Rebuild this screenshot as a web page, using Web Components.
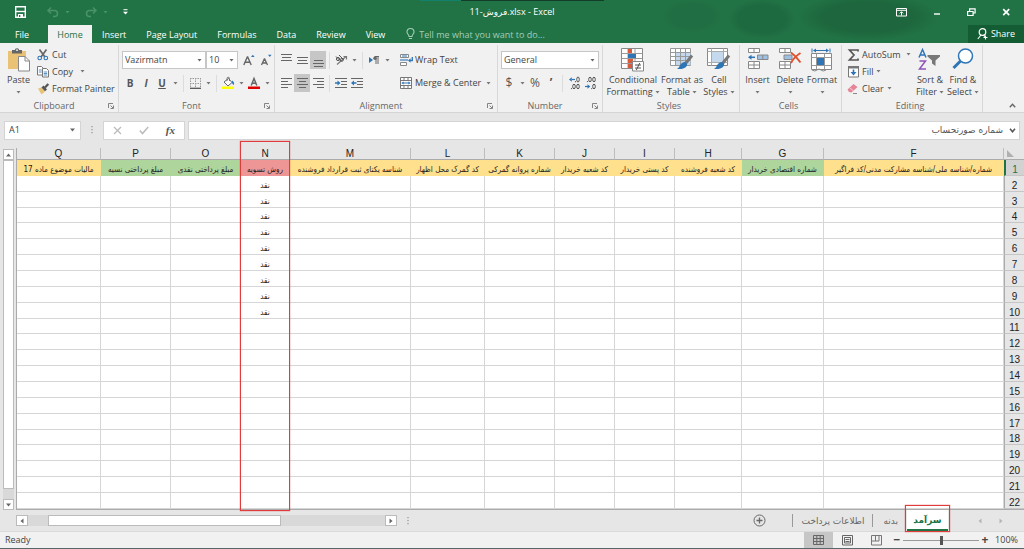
<!DOCTYPE html>
<html lang="en">
<head>
<meta charset="utf-8">
<title>فروش-11.xlsx - Excel</title>
<style>
html,body{margin:0;height:100%}
body{font:9px/12px "Open Sans","DejaVu Sans",sans-serif;color:#444;background:#e6e6e6;overflow:hidden}
</style>
</head>
<body>
<excel-app></excel-app>
<script>
const RESET = `
*{box-sizing:border-box}
button,select,input{font:inherit;color:inherit;border:0;background:none;padding:0;margin:0;border-radius:0;outline:0}
select{appearance:none}
button{display:flex;align-items:center;justify-content:center;white-space:nowrap}
`;
const define = (name, css, html) => customElements.define(name, class extends HTMLElement {
  constructor() {
    super();
    this.attachShadow({ mode: 'open' });
  }
  connectedCallback() {
    if (this.ready) return;
    this.ready = true;
    const t = document.createElement('template');
    t.innerHTML = `<style>${RESET}${css}</style>${typeof html === 'function' ? html(this) : html}`;
    this.shadowRoot.append(t.content.cloneNode(true));
  }
});

/* ---------- icons: [width, height, svg content] ---------- */
const lines = (...ls) => ls.map(([x, y, w]) => `<path d="M${x} ${y}h${w}" stroke="#666"/>`).join('');
const brush = '<path d="M22 7.5l-6.5 8" stroke="#777" stroke-width="3"/><path d="M14.500 14c2 .4 3 1.600 2.500 3.400-1.500 3-5.500 4-10 3.600 3-1.500 2.600-6 7.500-7z" fill="#2e75b6"/>';
const ICONS = {
  save: [11, 12, '<path d="M.7.7h9.600v10.600H.7z" stroke="#fff" stroke-width="1.400"/><path d="M1 5.500h9" stroke="#fff" stroke-width="1.400"/><path d="M3 8h5v3H3z" fill="#fff"/><path d="M4 9h1.300v2H4z" fill="#217346"/>'],
  undo: [12, 10, '<path d="M1 3.500h6.500a3 3 0 0 1 0 6H6M4 .5l-3 3 3 3" stroke="#4a9269" stroke-width="1.500"/>'],
  redo: [12, 10, '<path d="M11 3.500H4.500a3 3 0 0 0 0 6H6M8 .5l3 3-3 3" stroke="#4a9269" stroke-width="1.500"/>'],
  qat: [5, 6, '<path d="M.5.7h4" stroke="#fff"/><path d="M0 2.800h5L2.500 5.500z" fill="#fff"/>'],
  arrow: [5, 3, '<path d="M.5 0h4L2.500 2.600z" fill="currentColor"/>'],
  bulb: [9, 12, '<path d="M3 8.500C3 6.500 1 6 1 4a3.500 3.500 0 0 1 7 0c0 2-2 2.500-2 4.500zM3 10.500h3" stroke="#a5cdb6" stroke-width="1.100"/>'],
  ribbonmode: [11, 9, '<path d="M.5.500h10v7.500H.5zM.5 2.300h10" stroke="#fff"/><path d="M5.500 7.500V4M3.800 5.400l1.700-1.700 1.700 1.700" stroke="#fff"/>'],
  min: [8, 9, '<path d="M1 6h6" stroke="#fff" stroke-width="1.400"/>'],
  restore: [9, 9, '<path d="M.6 3.500h5.500v4H.6zM2.600 3V.8h5.500V5H6.400" stroke="#fff" stroke-width="1.200"/>'],
  close: [9, 9, '<path d="M1.200 1.200l6 6M7.200 1.200l-6 6" stroke="#fff" stroke-width="1.700"/>'],
  person: [11, 12, '<circle cx="5.500" cy="4" r="3.300" stroke="#fff" stroke-width="1.200"/><path d="M4 7L.8 11M6.500 7.300L8 8.500M8.500 7.500v4M6.500 9.500h4" stroke="#fff" stroke-width="1.100"/>'],
  paste: [24, 24, '<path d="M1 3h18v18H1z" fill="#e9c276"/><path d="M5 2h10v3.500H5z" fill="#666"/><circle cx="10" cy="2.500" r="2.200" fill="#666"/><circle cx="10" cy="2.200" r=".9" fill="#f1f1f1"/><path d="M11.500 8.500h6.500l4.500 4.500v10h-11z" fill="#fff" stroke="#888"/><path d="M18 8.500V13h4.500" stroke="#888"/>'],
  cut: [12, 12, '<path d="M2.500.5l5.500 7.500M9.500.5L4 8" stroke="#666" stroke-width="1.700"/><circle cx="2.700" cy="9" r="1.800" stroke="#2e75b6" stroke-width="1.100"/><circle cx="8.800" cy="9" r="1.800" stroke="#2e75b6" stroke-width="1.100"/>'],
  copy: [12, 12, '<path d="M.5.500h4l2 2V9h-6z" fill="#fff" stroke="#777"/><path d="M1.800 4h3M1.800 6h3" stroke="#2e75b6" stroke-width=".8"/><path d="M5.500 2.500h4l2 2v6.500h-6z" fill="#fff" stroke="#777"/><path d="M6.700 6h3.500M6.700 7.500h3.500M6.700 9h3.500" stroke="#2e75b6" stroke-width=".8"/>'],
  painter: [12, 12, '<path d="M1 5.500l3.500-1 3.500 4L4.500 11.500C3 9 2 7 1 5.500z" fill="#e9c276"/><path d="M4.500 4.500l2-2 3.500 4-2 1.800z" fill="#555"/><path d="M8 4.500l3.300-3.500" stroke="#555" stroke-width="2.200"/>'],
  grow: [12, 12, '<path d="M.8 11L4.300 3h.4L8.200 11M2 8.300h5" stroke="#666" stroke-width="1.400"/><path d="M8 3l1.800-2.300L11.600 3z" fill="#2e75b6"/>'],
  shrink: [12, 12, '<path d="M1.500 11L4.300 5h.4L7.500 11M2.500 9h4" stroke="#666" stroke-width="1.300"/><path d="M8 .8h3.600L9.800 3z" fill="#2e75b6"/>'],
  borders: [11, 11, '<path d="M.5 0v10M5.500 0v10M10.500 0v10M0 .5h11M0 5.500h11" stroke="#999" stroke-dasharray="1.500 1"/><path d="M0 10.300h11" stroke="#555" stroke-width="1.300"/>'],
  fill: [13, 12, '<path d="M2 5l4.500-3.500L10 5.500 6 9z" fill="#fff" stroke="#666"/><path d="M5 4V1.500a1.200 1.200 0 0 1 2.500 0V4" stroke="#666" stroke-width=".9"/><path d="M10 3.500q2.500 1 2 4.500-1.500-.5-2-2z" fill="#2e75b6"/><path d="M0 9.500h12V12H0z" fill="#ff0"/>'],
  fontcolor: [12, 12, '<path d="M3.200 8.500L6 1.500l2.800 7M4 6.300h4" stroke="#666" stroke-width="1.500"/><path d="M0 9.500h12V12H0z" fill="#e00000"/>'],
  top: [11, 14, lines([0, 1.500, 11], [1, 4.500, 9], [0, 7.500, 11])],
  middle: [11, 14, lines([0, 4.500, 11], [1, 7.500, 9], [0, 10.500, 11])],
  bottom: [11, 14, lines([1, 7.500, 9], [0, 10.500, 11], [1, 13.500, 9])],
  left: [11, 10, lines([0, .5, 11], [0, 3.500, 7], [0, 6.500, 11], [0, 9.500, 7])],
  center: [11, 10, lines([0, .5, 11], [2, 3.500, 7], [0, 6.500, 11], [2, 9.500, 7])],
  right: [11, 10, lines([0, .5, 11], [4, 3.500, 7], [0, 6.500, 11], [4, 9.500, 7])],
  orient: [13, 12, '<path d="M2 10.500L11 2.500M8.500 2.500h3V5.500" stroke="#777" stroke-width="1.200"/><circle cx="3" cy="5" r="1.600" stroke="#555"/><circle cx="6.800" cy="5.800" r="1.500" stroke="#555"/><path d="M1 2.500l4 4M4 1l4.500 4.500" stroke="#555"/>'],
  rtl: [10, 8, '<path d="M0 1l4 3-4 3z" fill="#2e75b6"/><path d="M7 8V.5M9 8V.5M5.500.500H10" stroke="#666"/><circle cx="6" cy="2.300" r="1.700" fill="#666"/>'],
  indent: [12, 11, lines([0, .5, 12], [6, 3.500, 6], [6, 6.500, 6], [0, 9.500, 12]) + '<path d="M0 5h3" stroke="#2e75b6" stroke-width="1.500"/><path d="M2.500 2.500L5.500 5l-3 2.500z" fill="#2e75b6"/>'],
  outdent: [12, 11, lines([0, .5, 12], [6, 3.500, 6], [6, 6.500, 6], [0, 9.500, 12]) + '<path d="M2 5h3.500" stroke="#2e75b6" stroke-width="1.500"/><path d="M3 2.500L0 5l3 2.500z" fill="#2e75b6"/>'],
  wrap: [13, 12, '<path d="M.5.500h8v3h-8zM.5 8.500h6v3h-6z" fill="#fff" stroke="#888"/><path d="M0 5h8v2H0z" fill="#2e75b6" opacity=".55"/><path d="M2 2h5" stroke="#2e75b6"/><path d="M12.300 3v3.500H10" stroke="#2e75b6" stroke-width="1.300"/><path d="M10.500 4.200v4.600L8 6.500z" fill="#2e75b6"/>'],
  merge: [12, 12, '<path d="M.5.500h11v11H.5zM.5 3.500h11M.5 8.500h11M4 .500v3M8 .500v3M4 8.500v3M8 8.500v3" fill="#fff" stroke="#777"/><path d="M3 6h6" stroke="#2e75b6"/><path d="M1.300 6L3.600 4.500v3zM10.700 6L8.400 4.500v3z" fill="#2e75b6"/>'],
  cond: [24, 24, '<path d="M.5.500h21v20H.5z" fill="#fff" stroke="#888"/><path d="M7 .500v20M14 .500v20M.5 5.500h21M.5 10.500h21M.5 15.500h21" stroke="#999"/><path d="M7 1h4v4H7zM7 16h4v4H7z" fill="#d9593d"/><path d="M7 6h8v4H7z" fill="#2e75b6"/><path d="M7 11h5v4H7z" fill="#d9593d"/><path d="M11.500 13.500h11v9.500h-11z" fill="#fff" stroke="#888"/><path d="M14 17h6M14 20h6M18.800 15l-3.500 7" stroke="#555"/>'],
  table: [24, 24, '<path d="M.5.500h20v17H.5z" fill="#fff" stroke="#999"/><path d="M5.500 5h15v12h-15z" fill="#c5d9ee"/><path d="M.5 4.500h20M.5 8.500h20M.5 12.500h20M5.500.500v17M10.500.500v17M15.500.500v17" stroke="#999"/>' + brush],
  style: [24, 24, '<path d="M.5.500h20v17H.5z" fill="#fff" stroke="#888"/><path d="M.5 3.500h20M.5 14.500h20M4.500.500v17M16.500.500v17" stroke="#aaa"/><path d="M5 4h11v10H5z" fill="#c5d9ee"/>' + brush],
  insert: [22, 22, '<path d="M1.500.500h11v4h-11zM7 .500v4M1.500 13.500h11v7h-11zM7 13.500v7M1.500 17h11" fill="#fff" stroke="#888"/><path d="M10.500 7h10.500v4.500H10.500zM15.800 7v4.500" fill="#9dc0e3" stroke="#888"/><path d="M3 9.300h5" stroke="#2e75b6" stroke-width="1.500"/><path d="M1 9.300L4.500 6.800v5z" fill="#2e75b6"/>'],
  delete: [24, 22, '<path d="M1.500.500h11v4h-11zM7 .500v4M1.500 13.500h11v7h-11zM7 13.500v7M1.500 17h11" fill="#fff" stroke="#888"/><path d="M6 7h8v4.500H6z" fill="#9dc0e3" stroke="#888"/><path d="M13 4.500q5 3.500 9.500 10M22.500 5Q16 9 13 15" stroke="#e0522f" stroke-width="1.900"/>'],
  format: [22, 24, '<path d="M1 .5v4M19 .5v4M3 2.500h14" stroke="#2e75b6"/><path d="M2 2.500L5 .5v4zM18 2.500L15 .5v4z" fill="#2e75b6"/><path d="M.5 5.500h20v16H.5z" fill="#fff" stroke="#888"/><path d="M.5 9.500h20M.5 17.500h20M5.500 5.500v16M13.500 5.500v16" stroke="#999"/><path d="M6 10h7v7H6z" fill="#2e75b6"/><path d="M1 22q3 2 5 0t4 0 5 0" stroke="#888"/>'],
  sum: [11, 12, '<path d="M10 2.500V1H1.500L6 6l-4.500 5H10V9.500" stroke="#555" stroke-width="1.700"/>'],
  filldown: [11, 12, '<path d="M.5.500h10v10.500H.5z" fill="#fff" stroke="#777"/><path d="M0 0h11v2.500H0z" fill="#777"/><path d="M5.500 3.500v4" stroke="#2e75b6" stroke-width="1.600"/><path d="M2.500 6l3 3.500 3-3.500z" fill="#2e75b6"/>'],
  eraser: [12, 11, '<path d="M.5 6.500l6-5.500L10.500 4 4.500 9.500 2 9z" fill="#e58597"/><path d="M2.500 4.800l4 3" stroke="#f6cdd5"/><path d="M6 10.500h4" stroke="#888"/>'],
  sort: [24, 24, '<path d="M1 9.500L4.500 1.500l3.500 8M2.200 7h4.600" stroke="#2e75b6" stroke-width="1.500"/><path d="M1.500 13h6l-6 8h6.500" stroke="#8e55b5" stroke-width="1.500"/><path d="M9.500 7H22v1.500L17.500 12.500V18L14 15.500v-3L9.500 8.500z" fill="#777"/>'],
  find: [22, 22, '<circle cx="13.500" cy="8" r="7" fill="#fff" stroke="#2e75b6" stroke-width="1.500"/><path d="M8.500 13l-7 7" stroke="#2e75b6" stroke-width="3"/>'],
  dec1: [11, 14, '<path d="M3 3.500h3" stroke="#2e75b6" stroke-width="1.200"/><path d="M0 3.500L2.800 1.300v4.400z" fill="#2e75b6"/><ellipse cx="9" cy="3.500" rx="1.300" ry="2.500" stroke="#555"/><circle cx="6.500" cy="5.700" r=".6" fill="#555"/><ellipse cx="5" cy="10.500" rx="1.300" ry="2.300" stroke="#555"/><ellipse cx="9" cy="10.500" rx="1.300" ry="2.300" stroke="#555"/><circle cx="2.500" cy="12.600" r=".6" fill="#555"/>'],
  dec2: [11, 14, '<ellipse cx="5" cy="3.500" rx="1.300" ry="2.300" stroke="#555"/><ellipse cx="9" cy="3.500" rx="1.300" ry="2.300" stroke="#555"/><circle cx="2.500" cy="5.600" r=".6" fill="#555"/><path d="M0 10.500h3" stroke="#2e75b6" stroke-width="1.200"/><path d="M5.300 10.500L2.500 8.300v4.400z" fill="#2e75b6"/><ellipse cx="9" cy="10.500" rx="1.300" ry="2.300" stroke="#555"/><circle cx="6.700" cy="12.600" r=".6" fill="#555"/>'],
  launcher: [6, 6, '<path d="M.5 5V.500H5M2.500 2.500l2.500 2.500M5.500 2.500v3h-3" stroke="#777" stroke-width=".9"/>'],
  caret: [7, 5, '<path d="M.8 4.200l2.700-3 2.700 3" stroke="#666" stroke-width="1.400"/>'],
  caretdown: [7, 5, '<path d="M1 .8l2.500 3L6 .8" stroke="#555" stroke-width="1.500"/>'],
  dots: [2, 8, '<path d="M1 0v8" stroke="#999" stroke-dasharray="1.200 1.800" stroke-width="1.300"/>'],
  cross: [9, 9, '<path d="M1 1l7 7M8 1L1 8" stroke="#bbb" stroke-width="1.300"/>'],
  check: [10, 9, '<path d="M.8 4.500L3.500 7.500 9.200 1" stroke="#bbb" stroke-width="1.500"/>'],
  corner: [7, 7, '<path d="M0 0v7h7z" fill="#b0b0b0"/>'],
  up: [5, 4, '<path d="M0 3.500h5L2.500.5z" fill="#666"/>'],
  down: [5, 4, '<path d="M0 .5h5L2.500 3.500z" fill="#666"/>'],
  prev: [4, 6, '<path d="M3.500 .5v5L.5 3z" fill="currentColor"/>'],
  next: [4, 6, '<path d="M.5 .5v5L3.500 3z" fill="currentColor"/>'],
  add: [13, 13, '<circle cx="6.500" cy="6.500" r="5.500" stroke="#666"/><path d="M3.500 6.500h6M6.500 3.500v6" stroke="#666" stroke-width="1.300"/>'],
  vnormal: [11, 11, '<path d="M.5.500h10v9H.5zM.5 3.500h10M.5 6.500h10M3.800.500v9M7.200.500v9" stroke="#666"/>'],
  vpage: [11, 11, '<path d="M.5.500h10v9.500H.5z" stroke="#666"/><path d="M2.500 2.500h6v5.500h-6zM3.500 4.500h4M3.500 6.500h4" stroke="#666"/>'],
  vbreak: [11, 11, '<path d="M.5.500h10v9.500H.5z" stroke="#777"/><path d="M4.500.500v5.500M8 .500v5.500M.5 6h7.500" stroke="#777"/>'],
};
define('x-icon', ':host{display:block;flex:none;line-height:0}svg{display:block;overflow:visible}', el => {
  const [w, h, body] = ICONS[el.getAttribute('name')];
  return `<svg width="${w}" height="${h}" viewBox="0 0 ${w} ${h}" fill="none" aria-hidden="true">${body}</svg>`;
});

/* ---------- title bar and tabs ---------- */
define('title-bar', `
:host{display:grid;grid-template-columns:1fr auto 1fr;align-items:center;height:24px;color:#fff}
.l,.r{display:flex;align-items:center}.l{padding-left:15px}.r{justify-content:flex-end;padding-right:13px;gap:26px}
.undo{margin-left:21px}
.arr{color:#4a9269;margin:0 15px 0 6px}
h1{font:inherit;margin:0}
`, `
<div class="l"><button aria-label="Save"><x-icon name="save"></x-icon></button>
<button class="undo" aria-label="Undo"><x-icon name="undo"></x-icon></button><x-icon class="arr" name="arrow"></x-icon>
<button aria-label="Redo"><x-icon name="redo"></x-icon></button><x-icon class="arr" name="arrow"></x-icon>
<button aria-label="Customize"><x-icon name="qat"></x-icon></button></div>
<h1>11-<bdi>فروش</bdi>.xlsx - Excel</h1>
<div class="r"><button aria-label="Ribbon options"><x-icon name="ribbonmode"></x-icon></button><button aria-label="Minimize"><x-icon name="min"></x-icon></button>
<button aria-label="Restore"><x-icon name="restore"></x-icon></button><button aria-label="Close"><x-icon name="close"></x-icon></button></div>`);

define('tab-bar', `
:host{display:flex;align-items:flex-end;height:19px;color:#fff}
nav{display:flex}
button{padding:1px 10px 0;height:18px}
.file{padding:1px 0 0;width:44px;margin-right:4px}
.on{background:#f1f1f1;color:#217346;width:44px;padding:1px 0 0}
.tell{color:#a5cdb6;display:flex;gap:4px;align-items:center;height:18px;margin-left:11px}
input{width:140px;height:18px}input::placeholder{color:#a5cdb6;opacity:1}
.share{margin-left:auto;background:#145c33;width:56px;gap:3px;padding:0}
`, `
<nav><button class="file">File</button><button class="on">Home</button><button>Insert</button><button>Page Layout</button><button>Formulas</button><button>Data</button><button>Review</button><button>View</button></nav>
<label class="tell"><x-icon name="bulb"></x-icon><input placeholder="Tell me what you want to do..." aria-label="Tell me what you want to do"></label>
<button class="share"><x-icon name="person"></x-icon>Share</button>`);

/* ---------- ribbon ---------- */
define('ribbon-group', `
:host{display:flex;flex-direction:column;flex:none;border-right:1px solid #d8d8d8;height:67px;margin-top:2px}
.body{display:flex;flex:1;padding-top:1px}
footer{display:grid;grid-template-columns:1fr auto;align-items:center;height:12px;color:#666;text-align:center;padding-right:4px}
`, el => `<div class="body"><slot></slot></div><footer><span>${el.getAttribute('label')}</span>${el.hasAttribute('launch') ? '<button aria-label="More options"><x-icon name="launcher"></x-icon></button>' : ''}</footer>`);

define('big-button', `
:host{display:block;flex:none}
button{flex-direction:column;justify-content:flex-start;width:100%;line-height:12px}
.i{height:28px;display:flex;align-items:flex-start;justify-content:center;padding-top:2px}
.n{display:flex;align-items:center;gap:2px;height:12px;color:#444}x-icon[name=arrow]{color:#777}
`, el => `<button><span class="i"><x-icon name="${el.getAttribute('icon')}"></x-icon></span><span>${el.getAttribute('top')}</span><span class="n">${el.getAttribute('bottom') || ''}<x-icon name="arrow"></x-icon></span></button>`);

define('small-button', `
:host{display:block;flex:none}
button{height:17px;gap:3px;justify-content:flex-start}x-icon[name=arrow]{color:#777;margin-left:var(--arrow-gap,0)}
.i{width:12px;display:flex;justify-content:center}
`, el => `<button><span class="i"><x-icon name="${el.getAttribute('icon')}"></x-icon></span><slot></slot>${el.hasAttribute('menu') ? '<x-icon name="arrow"></x-icon>' : ''}</button>`);

define('tool-button', `
:host{display:block;flex:none;width:16px}
:host([on]){background:#c6c6c6}:host([menu]){width:10px}
button{width:100%;height:18px;color:#555}:host([menu]) button{color:#777}
`, el => `<button aria-label="${el.getAttribute('label') || el.getAttribute('icon')}"><slot>${el.hasAttribute('icon') ? `<x-icon name="${el.getAttribute('icon')}"></x-icon>` : ''}</slot></button>`);

define('combo-box', `
:host{display:grid;align-items:center;background:#fff;border:1px solid #c6c6c6;height:18px;flex:none}
select,x-icon{grid-area:1/1}select{width:100%;height:16px;padding-left:2px}
x-icon{justify-self:end;margin-right:3px;pointer-events:none;color:#666}
`, el => `<select aria-label="${el.getAttribute('label')}"><option>${el.getAttribute('value')}</option></select><x-icon name="arrow"></x-icon>`);

define('ribbon-bar', `
:host{display:flex;height:70px;background:#f1f1f1;border-bottom:1px solid #d5d5d5;align-items:flex-start;flex:none}
.col{display:flex;flex-direction:column}
.row{display:flex;align-items:center;height:18px}
.rows{display:flex;flex-direction:column;gap:5px;padding-top:5px}
.pad{padding-left:3px}.tools{width:125px}
hr{width:1px;height:17px;border:0;background:#dcdcdc;margin:0 3px;flex:none}
b{font-size:10px}.sym{font-size:12px}
.clip{width:119px}.font{width:156px}.align{width:223px}.num{width:105px}.styles{width:137px}.cells{width:102px}.edit{width:141px}
.sums{padding-left:5px;width:71px}
.more{margin:auto 8px 4px auto}
`, `
<ribbon-group class="clip" label="Clipboard" launch>
  <big-button icon="paste" top="Paste" style="width:37px"></big-button>
  <div class="col"><small-button icon="cut">Cut</small-button><small-button icon="copy" menu style="--arrow-gap:4px">Copy</small-button><small-button icon="painter">Format Painter</small-button></div>
</ribbon-group>
<ribbon-group class="font" label="Font" launch>
  <div class="rows pad">
    <div class="row"><combo-box label="Font name" value="Vazirmatn" style="width:84px"></combo-box><combo-box label="Font size" value="10" style="width:32px"></combo-box><tool-button icon="grow" style="margin-left:3px"></tool-button><tool-button icon="shrink" style="margin-left:1px"></tool-button></div>
    <div class="row"><tool-button label="Bold"><b>B</b></tool-button><tool-button label="Italic"><b><i>I</i></b></tool-button><tool-button label="Underline"><b><u>U</u></b></tool-button><tool-button menu icon="arrow"></tool-button><hr><tool-button icon="borders"></tool-button><tool-button menu icon="arrow"></tool-button><hr><tool-button icon="fill"></tool-button><tool-button menu icon="arrow"></tool-button><tool-button icon="fontcolor"></tool-button><tool-button menu icon="arrow"></tool-button></div>
  </div>
</ribbon-group>
<ribbon-group class="align" label="Alignment" launch>
  <div class="rows pad tools">
    <div class="row"><tool-button icon="top"></tool-button><tool-button icon="middle"></tool-button><tool-button icon="bottom" on></tool-button><hr><tool-button icon="orient"></tool-button><tool-button menu icon="arrow"></tool-button><hr><tool-button icon="rtl"></tool-button><tool-button menu icon="arrow"></tool-button></div>
    <div class="row"><tool-button icon="left"></tool-button><tool-button icon="center" on></tool-button><tool-button icon="right"></tool-button><hr><tool-button icon="indent"></tool-button><tool-button icon="outdent"></tool-button></div>
  </div>
  <div class="rows"><div class="row"><small-button icon="wrap">Wrap Text</small-button></div><div class="row"><small-button icon="merge" menu style="--arrow-gap:2px">Merge &amp; Center</small-button></div></div>
</ribbon-group>
<ribbon-group class="num" label="Number" launch>
  <div class="rows pad">
    <div class="row"><combo-box label="Number format" value="General" style="width:98px"></combo-box></div>
    <div class="row"><tool-button label="Currency"><span class="sym">$</span></tool-button><tool-button menu icon="arrow"></tool-button><tool-button label="Percent"><span class="sym">%</span></tool-button><tool-button label="Comma"><b class="sym">’</b></tool-button><hr><tool-button icon="dec1"></tool-button><tool-button icon="dec2"></tool-button></div>
  </div>
</ribbon-group>
<ribbon-group class="styles" label="Styles">
  <big-button icon="cond" top="Conditional" bottom="Formatting" style="width:60px"></big-button><big-button icon="table" top="Format as" bottom="Table" style="width:38px"></big-button><big-button icon="style" top="Cell" bottom="Styles" style="width:36px"></big-button>
</ribbon-group>
<ribbon-group class="cells" label="Cells">
  <big-button icon="insert" top="Insert" style="width:35px"></big-button><big-button icon="delete" top="Delete" style="width:30px"></big-button><big-button icon="format" top="Format" style="width:34px"></big-button>
</ribbon-group>
<ribbon-group class="edit" label="Editing">
  <div class="col sums"><small-button icon="sum" menu style="--arrow-gap:2px">AutoSum</small-button><small-button icon="filldown" menu>Fill</small-button><small-button icon="eraser" menu>Clear</small-button></div>
  <big-button icon="sort" top="Sort &amp;" bottom="Filter" style="width:34px"></big-button><big-button icon="find" top="Find &amp;" bottom="Select" style="width:32px"></big-button>
</ribbon-group>
<button class="more" aria-label="Collapse ribbon"><x-icon name="caret"></x-icon></button>`);

/* ---------- formula bar ---------- */
define('formula-bar', `
:host{display:flex;align-items:center;height:35px;padding:0 4px 1px;flex:none}
.box{background:#fff;border:1px solid #d4d4d4;height:19px;display:flex;align-items:center}
.name{width:77px;padding:0 5px 0 4px}.name input{flex:1;min-width:0}
.dots{margin:0 10px}
.btns{width:82px;justify-content:space-between;padding:0 9px;margin-right:3px}
.fx{font:italic bold 11px "Liberation Serif",serif;color:#555}
.f{flex:1;padding-right:3px}.f input{flex:1;min-width:0;text-align:right;padding-right:6px;font-family:"DejaVu Sans",sans-serif;color:#555}
`, `
<div class="box name"><input value="A1" aria-label="Name box"><x-icon name="down"></x-icon></div>
<x-icon class="dots" name="dots"></x-icon>
<div class="box btns"><button aria-label="Cancel"><x-icon name="cross"></x-icon></button><button aria-label="Enter"><x-icon name="check"></x-icon></button><button class="fx" aria-label="Insert function">fx</button></div>
<div class="box f"><input dir="rtl" value="شماره صورتحساب" aria-label="Formula"><button aria-label="Expand"><x-icon name="caretdown"></x-icon></button></div>`);

/* ---------- sheet ---------- */
const COLS = [
  ['Q', 84, 'y', 'مالیات موضوع ماده 17'], ['P', 70, 'g', 'مبلغ پرداختی نسیه'], ['O', 70, 'g', 'مبلغ پرداختی نقدی'],
  ['N', 49, 'r', 'روش تسویه'], ['M', 121, 'y', 'شناسه یکتای ثبت قرارداد فروشنده'], ['L', 74, 'y', 'کد گمرک محل اظهار'],
  ['K', 70, 'y', 'شماره پروانه گمرکی'], ['J', 60, 'y', 'کد شعبه خریدار'], ['I', 60, 'y', 'کد پستی خریدار'],
  ['H', 67, 'y', 'کد شعبه فروشنده'], ['G', 82, 'g', 'شماره اقتصادی خریدار'], ['F', 0, 'y', 'شماره/شناسه ملی/شناسه مشارکت مدنی/کد فراگیر'],
];
const ROWS = Array.from({ length: 22 }, (_, i) => i + 1);
const cell = (row, [name, , fill, title]) => row === 1
  ? `<td class="${fill}" dir="rtl">${title}</td>`
  : `<td>${name === 'N' && row <= 10 ? 'نقد' : ''}</td>`;
define('sheet-grid', `
:host{display:flex;flex:1;min-height:0}
.v{width:16px;display:flex;flex-direction:column;align-items:center;padding:1px 2px 0 3px;flex:none}
.v button{width:11px;height:11px;background:#fff;border:1px solid #bbb;flex:none}
.v .track{flex:1;width:11px;background:#d9d9d9}
.v .thumb{height:97%;background:#fff;border:1px solid #bbb}
.wrap{position:relative;flex:1;min-width:0;border-left:1px solid #ababab;border-bottom:1px solid #ababab;background:#fff}
table{border-collapse:separate;border-spacing:0;table-layout:fixed;width:100%;height:100%;color:#222}
th,td{padding:0;overflow:hidden;white-space:nowrap;text-align:center;line-height:10px}
th{background:#e6e6e6;font:10px/10px "Liberation Sans",sans-serif;color:#222}
thead th{height:12px;border-right:1px solid #bdbdbd;border-bottom:1px solid #ababab}
thead th:last-child{border-right:0}
thead x-icon{margin-left:3px}
tbody td,tbody th{vertical-align:bottom}
td{border-right:1px solid #d6d6d6;border-bottom:1px solid #d6d6d6;font:8px/10px "DejaVu Sans Condensed","DejaVu Sans",sans-serif}
tbody th{border-bottom:1px solid #c6c6c6;border-left:1px solid #ababab}
tbody tr:first-child th{background:#d2d2d2;color:#217346;border-left:2px solid #217346}
.y{background:#ffe08c}.g{background:#aed59c}.r{background:#ee9595}.y,.g,.r{border-color:transparent}
.mark{position:absolute;left:223px;width:50px;top:-7px;bottom:-2px;border:1px solid #e03c3c;box-shadow:0 0 1px #e03c3c;pointer-events:none}
`, () => `
<div class="v"><button aria-label="Scroll up"><x-icon name="up"></x-icon></button><div class="track"><div class="thumb"></div></div><button aria-label="Scroll down"><x-icon name="down"></x-icon></button></div>
<div class="wrap"><table><colgroup>${COLS.map(c => `<col${c[1] ? ` style="width:${c[1]}px"` : ''}>`).join('')}<col style="width:20px"></colgroup>
<thead><tr>${COLS.map(c => `<th scope="col">${c[0]}</th>`).join('')}<th><x-icon name="corner"></x-icon></th></tr></thead>
<tbody>${ROWS.map(r => `<tr>${COLS.map(c => cell(r, c)).join('')}<th scope="row">${r}</th></tr>`).join('')}</tbody></table>
<div class="mark"></div></div>`);

define('sheet-tabs', `
:host{display:flex;align-items:center;height:21px;padding-left:16px;flex:none}
.h{flex:0 1 381px;min-width:0;display:flex;height:11px;background:#d9d9d9}
.h button{width:12px;background:#fff;border:1px solid #bbb;color:#666}
.track{flex:1;padding-left:20px}.thumb{width:69%;height:11px;background:#fff;border:1px solid #bbb}
.dots{margin-left:10px}
.tabs{margin-left:auto;display:flex;align-items:center;height:21px;font:9px/12px "DejaVu Sans",sans-serif;color:#666}
.tabs .add{margin-right:26px}
.tab{height:13px;border-left:1px solid #999;padding:0 8px 0 9px}
.tab+.tab{padding:0 9px 0 10px}
.on{position:relative;height:21px;width:41px;background:#fff;color:#217346;font-weight:bold;border-bottom:2px solid #217346}
.mark{position:absolute;inset:-5px -2px -3px;border:1px solid #e03c3c;box-shadow:0 0 1px #e03c3c}
.nav{display:flex;gap:17px;color:#b5b5b5;padding:0 21px 0 30px}
`, `
<div class="h"><button aria-label="Scroll left"><x-icon name="prev"></x-icon></button><div class="track"><div class="thumb"></div></div><button aria-label="Scroll right"><x-icon name="next"></x-icon></button></div>
<x-icon class="dots" name="dots"></x-icon>
<div class="tabs"><button class="add" aria-label="New sheet"><x-icon name="add"></x-icon></button><button class="tab">اطلاعات پرداخت</button><button class="tab">بدنه</button><button class="on">سرآمد<span class="mark"></span></button>
<div class="nav"><button aria-label="Previous sheet"><x-icon name="prev"></x-icon></button><button aria-label="Next sheet"><x-icon name="next"></x-icon></button></div></div>`);

define('status-bar', `
:host{display:flex;align-items:center;height:18px;background:#f1f1f1;border-top:1px solid #dadada;border-bottom:1px solid #56686a;padding:0 6px 0 5px;flex:none;box-sizing:border-box}
.v{margin-left:auto;display:flex}.v button{width:29px;height:16px}.v .sel{background:#c6c6c6}
.z{width:10px;color:#444;font-weight:bold;font-size:12px}
.v+.z{margin-left:1px}
input{appearance:none;width:76px;height:12px;margin:0 1px;background:linear-gradient(#999,#999) center/100% 1px no-repeat}
input::-webkit-slider-thumb{appearance:none;width:3px;height:9px;background:#555}
output{width:28px;text-align:right}
`, `
<span>Ready</span>
<div class="v"><button class="sel" aria-label="Normal"><x-icon name="vnormal"></x-icon></button><button aria-label="Page layout"><x-icon name="vpage"></x-icon></button><button aria-label="Page break"><x-icon name="vbreak"></x-icon></button></div>
<button class="z" aria-label="Zoom out">−</button><input type="range" min="0" max="200" value="100" aria-label="Zoom"><button class="z" aria-label="Zoom in">+</button><output>100%</output>`);

define('excel-app', `
:host{display:flex;flex-direction:column;height:100vh}
header{flex:none;background:
 linear-gradient(90deg,transparent 41%,#12806a 0,#12806a 45%,#123d28 0,#123d28 59%,transparent 0) 0 0/100% 1px no-repeat,
 radial-gradient(ellipse 34px 20px at right 262px top 19px,#1e6a40 70%,transparent),
 radial-gradient(ellipse 32px 18px at right 332px top 16px,#206e43 60%,transparent),
 radial-gradient(ellipse 72px 24px at right 156px top 17px,#1e663d 60%,transparent),#217346}
`, `<header><title-bar></title-bar><tab-bar></tab-bar></header><ribbon-bar></ribbon-bar><formula-bar></formula-bar><sheet-grid></sheet-grid><sheet-tabs></sheet-tabs><status-bar></status-bar>`);
</script>
</body>
</html>
